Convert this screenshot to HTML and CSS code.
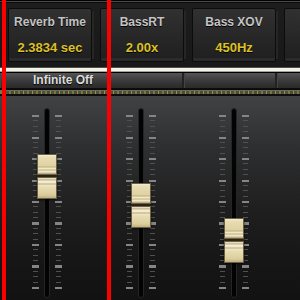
FILE: index.html
```html
<!DOCTYPE html>
<html>
<head>
  <meta charset="UTF-8">
  <link rel="stylesheet" href="styles.css">
  <title>Reverb Faders</title>
</head>
<body>
  <div class="screen">
    <div class="header">
      <div class="panels">
        <div class="panel"><span class="label">Reverb Time</span><span class="value">2.3834 sec</span></div>
        <div class="panel"><span class="label">BassRT</span><span class="value">2.00x</span></div>
        <div class="panel"><span class="label">Bass XOV</span><span class="value">450Hz</span></div>
        <div class="panel"></div>
      </div>
    </div>
    <div class="rule-white"></div>
    <div class="mode-bar">
      <div class="segment first">Infinite Off</div>
      <div class="segment mid"></div>
      <div class="segment last"></div>
    </div>
    <div class="rule-gold"></div>
    <div class="faders">
      <div class="fader">
        <div class="ticks"></div><div class="track"></div><div class="ticks"></div>
        <div class="knob" style="top:46px"><div class="cap upper"></div><div class="cap lower"></div></div>
      </div>
      <div class="fader">
        <div class="ticks"></div><div class="track"></div><div class="ticks"></div>
        <div class="knob" style="top:75px"><div class="cap upper"></div><div class="cap lower"></div></div>
      </div>
      <div class="fader">
        <div class="ticks"></div><div class="track"></div><div class="ticks"></div>
        <div class="knob" style="top:110px"><div class="cap upper"></div><div class="cap lower"></div></div>
      </div>
    </div>
    <div class="marker left"></div>
    <div class="marker right"></div>
  </div>
</body>
</html>
```

FILE: styles.css
```css
body {
  margin: 0;
  background: #111;
  font-family: "Liberation Sans", Arial, sans-serif;
}
.screen {
  position: relative;
  width: 300px;
  height: 300px;
  overflow: hidden;
  background: #111;
}
.header {
  height: 67px;
  box-sizing: border-box;
  padding-top: 8px;
  background: linear-gradient(#000 0 1px, #4a4a4a 1px 2px, #0a0a0a 2px 3px, #1d1d1d 3px, #181818);
}
.panels {
  display: flex;
  gap: 8px;
  padding-left: 8px;
}
.panel {
  flex: 0 0 84px;
  height: 54px;
  box-sizing: border-box;
  border: 1px solid #0c0c0c;
  border-radius: 2px;
  background: linear-gradient(#313131, #262626 60%, #1f1f1f);
  box-shadow: inset 0 -3px 0 #2b2b2b, 5px 0 0 -3px #262626;
  display: flex;
  flex-direction: column;
  align-items: center;
  padding-top: 6px;
}
.label {
  color: #c4c4c4;
  font-size: 12px;
  font-weight: bold;
  text-shadow: 0 1px 0 #000;
}
.value {
  margin-top: 11px;
  color: #dcc126;
  font-size: 13px;
  font-weight: bold;
  text-shadow: 0 1px 0 #000;
}
.rule-white {
  height: 6px;
  background: linear-gradient(#4e4e4a 0 1px, #f3f2ea 1px 4px, #a4a294 4px 5px, #000 5px);
}
.mode-bar {
  display: flex;
  height: 15px;
}
.segment {
  box-sizing: border-box;
  background: linear-gradient(#555, #444 30%, #333 70%, #2a2a2a);
  border-right: 2px solid #222;
  box-shadow: inset 1px 0 0 #444;
}
.segment.first {
  flex: 0 0 184px;
  padding-left: 33px;
  color: #dcdcdc;
  font-size: 12px;
  font-weight: bold;
  line-height: 15px;
  text-shadow: 0 1px 1px #000;
}
.segment.mid {
  flex: 0 0 93px;
}
.segment.last {
  flex: 1;
  border-right: none;
}
.rule-gold {
  height: 8px;
  background:
    linear-gradient(#0c0c0c 0 2px, transparent 2px 3px, transparent 3px 6px, #0e0e0e 6px),
    repeating-linear-gradient(90deg, #7c7838 0 2px, #4a4a3e 2px 5px, #a09440 5px 6px, #505040 6px 9px);
  box-shadow: inset 0 2px 0 #0c0c0c, inset 0 3px 0 #6a6a5e;
}
.faders {
  height: 204px;
  box-sizing: border-box;
  padding-top: 12px;
  display: grid;
  grid-template-columns: 94px 94px 92px;
  justify-items: center;
  background: linear-gradient(#404243, #2e2f30 25%, #1f1f1f 55%, #151515 85%, #121212);
}
.fader {
  position: relative;
  display: flex;
  gap: 5px;
  height: 190px;
}
.ticks {
  width: 7px;
  height: 174px;
  margin-top: 7px;
  background:
    repeating-linear-gradient(#858585 0 2px, transparent 2px 21.5px) 0 0 / 7px 100% no-repeat,
    repeating-linear-gradient(#505050 0 1px, transparent 1px 5.375px) 1px 0 / 5px 100% no-repeat;
}
.track {
  width: 6px;
  box-sizing: border-box;
  border: 1px solid #252525;
  border-radius: 3px;
  background: #030303;
}
.knob {
  position: absolute;
  left: 5px;
  width: 20px;
  height: 45px;
  background: #2a2418;
  box-shadow: 0 1px 2px rgba(0, 0, 0, 0.7);
}
.cap {
  box-sizing: border-box;
  border: 1px solid #6a6046;
}
.cap.upper {
  height: 21px;
  margin-bottom: 2px;
  background: linear-gradient(#f5eecf 0, #e8ddb4 2px, #ded2a2 11px, #bdac7c 12px, #efe7c6 13px, #f2eacd 14px, #c2b17f 15px, #ece2bd 16px, #f3ecd3 17px, #c6b686 18px, #9a8a5c 21px);
}
.cap.lower {
  height: 22px;
  background: linear-gradient(#f3ebd2 0, #c2b180 2px, #f6efd9 3px, #f0e8cd 5px, #b9a877 6px, #efe6c7 7px, #e8ddb3 9px, #dacd9b 17px, #ab9b6b 22px);
}
.marker {
  position: absolute;
  top: 0;
  width: 4px;
  height: 300px;
  background: #fb0000;
}
.marker.left {
  left: 2px;
}
.marker.right {
  left: 107px;
}
```
